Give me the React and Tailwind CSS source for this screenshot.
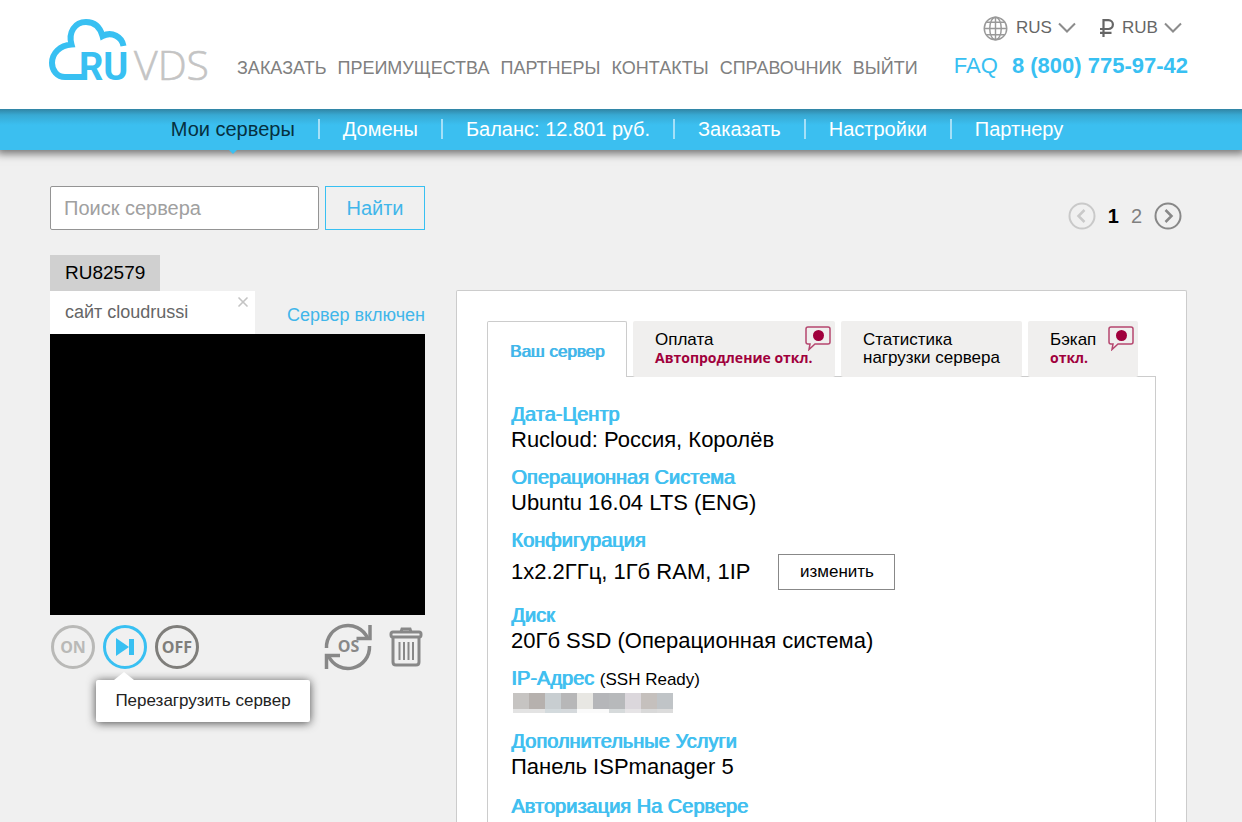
import React, { useState } from 'react';
import { X } from 'lucide-react';

const menu = ['ЗАКАЗАТЬ', 'ПРЕИМУЩЕСТВА', 'ПАРТНЕРЫ', 'КОНТАКТЫ', 'СПРАВОЧНИК', 'ВЫЙТИ'];

const sections = ['Мои серверы', 'Домены', 'Баланс: 12.801 руб.', 'Заказать', 'Настройки', 'Партнеру'];

const maskedIp = [
  { top: 'bg-[#c6c4c2]', bottom: 'bg-[#e3e3e3]' },
  { top: 'bg-[#b6b1ae]', bottom: 'bg-[#e3e3e3]' },
  { top: 'bg-[#c8ced1]', bottom: 'bg-[#d3dadd]' },
  { top: 'bg-[#b7b7b8]', bottom: 'bg-[#d5d9dc]' },
  { top: 'bg-[#e8e7e3]', bottom: 'bg-[#fafafa]' },
  { top: 'bg-[#b5b6b9]', bottom: 'bg-[#fafafa]' },
  { top: 'bg-[#b7b9bb]', bottom: 'bg-[#d6dadb]' },
  { top: 'bg-[#dbd7dc]', bottom: 'bg-[#e6e4e6]' },
  { top: 'bg-[#c5c0bd]', bottom: 'bg-[#d9d9d9]' },
  { top: 'bg-[#c0c4c7]', bottom: 'bg-[#dcdcdc]' },
];

function Logo() {
  return (
    <svg width="170" height="80" viewBox="0 0 170 80" role="img" aria-label="RUVDS">
      <path
        d="M36 59H17C9 59 4 52.500 4 45C4 35 12 27.500 23.500 26.500C20 14 27 4 38 4C46 4 52 9 54.500 18C64 13 74 19 75.500 28"
        fill="none"
        stroke="#38c0f2"
        strokeWidth="6"
      />
      <text x="31" y="62" fill="#38c0f2" className="font-[Roboto,sans-serif] text-[38px] font-bold">
        RU
      </text>
      <text
        x="86"
        y="62"
        fill="#c4c4c4"
        stroke="#c4c4c4"
        strokeWidth="0.600"
        className="font-['Open_Sans',sans-serif] text-[41px] font-light"
      >
        VDS
      </text>
    </svg>
  );
}

function Globe() {
  return (
    <svg width="25" height="25" viewBox="0 0 26 26" fill="none" stroke="#999" strokeWidth="1.500">
      <circle cx="13" cy="13" r="11.700" />
      <ellipse cx="13" cy="13" rx="6" ry="11.700" />
      <path d="M13 1v24M1 13h24M3.500 6.500h19M3.500 19.500h19" />
    </svg>
  );
}

function Ruble() {
  return (
    <svg width="14" height="18" viewBox="0 0 14 18" fill="none" stroke="#666" strokeWidth="2.200">
      <path d="M3.500 18V1.200H8.500a4.300 4.300 0 0 1 0 8.800H0M0 13.800h11.500" />
    </svg>
  );
}

function Chevron() {
  return (
    <svg width="18" height="12" viewBox="0 0 18 12" fill="none" stroke="#8c8c8c" strokeWidth="2" className="pointer-events-none -ml-5">
      <path d="M1 1.500l8 8 8-8" />
    </svg>
  );
}

function Alert() {
  return (
    <svg width="26" height="25" viewBox="0 0 26 25" fill="none" className="absolute right-1 top-[5px]">
      <path
        d="M3 1h20a2 2 0 0 1 2 2v13a2 2 0 0 1-2 2H10l-6 5.500L5 18H3a2 2 0 0 1-2-2V3a2 2 0 0 1 2-2z"
        stroke="#b5476f"
        strokeWidth="1.500"
      />
      <circle cx="13.500" cy="9.500" r="5.500" fill="#a0003c" />
    </svg>
  );
}

function RoundArrow({ label, disabled, d }) {
  return (
    <button type="button" aria-label={label} disabled={disabled} className={disabled ? 'text-[#c9c9c9]' : 'text-[#888]'}>
      <svg width="28" height="28" viewBox="0 0 28 28" fill="none" stroke="currentColor" strokeWidth="2">
        <circle cx="14" cy="14" r="12.500" />
        <path d={d} strokeWidth="2.500" />
      </svg>
    </button>
  );
}

function Field({ title, note, children }) {
  return (
    <div className="mb-[11px]">
      <dt className="text-xl leading-6 text-[#41bff0]">
        <span className="[text-shadow:1px_0_0_currentColor]">{title}</span>
        {note && <span className="ml-1.5 text-[17px] leading-4 text-black">{note}</span>}
      </dt>
      <dd className="min-h-7 text-[22px] leading-7 text-black">{children}</dd>
    </div>
  );
}

export default function App() {
  const [query, setQuery] = useState('');

  return (
    <div className="flex min-h-screen flex-col bg-[#f0f0f0] font-['Liberation_Sans',Arial,sans-serif]">
      <header className="relative z-10 flex h-[109px] items-start justify-between bg-white pl-12 pr-[54px]">
        <div className="flex items-start">
          <a href="#home" className="mt-[18px]">
            <Logo />
          </a>
          <nav className="ml-[19px] mt-14 flex gap-[11px] text-lg leading-6 text-[#808080]">
            {menu.map((item) => (
              <a key={item} href="#menu">{item}</a>
            ))}
          </nav>
        </div>
        <div className="mt-3.5">
          <div className="flex items-center justify-end gap-6 pr-1.5 text-[17px] leading-7 text-[#666]">
            <div className="flex items-center">
              <label htmlFor="language" aria-label="Язык" className="mr-2">
                <Globe />
              </label>
              <select id="language" className="w-[62px] appearance-none">
                <option>RUS</option>
              </select>
              <Chevron />
            </div>
            <div className="flex items-center">
              <label htmlFor="currency" aria-label="Валюта" className="mr-2">
                <Ruble />
              </label>
              <select id="currency" className="w-[62px] appearance-none">
                <option>RUB</option>
              </select>
              <Chevron />
            </div>
          </div>
          <div className="mt-2 flex justify-end gap-3.5 text-[22px] leading-8 text-[#38c0f2]">
            <a href="#faq">FAQ</a>
            <a href="tel:88007759742" className="font-bold">8 (800) 775-97-42</a>
          </div>
        </div>
      </header>

      <nav className="flex h-[41px] items-center justify-center bg-[linear-gradient(#3184a4,#38a9d3_6px,#3bbff0_16px)] pb-0.5 pr-2 text-xl leading-6 text-white shadow-[0_1px_8px_3px_rgba(0,0,0,0.5)]">
        {sections.map((item, i) => (
          <React.Fragment key={item}>
            {i > 0 && <span className="mx-[23px] h-5 w-0.5 bg-[#a5e0f8]" />}
            <a href="#section" className={i === 0 ? 'relative text-[#06303f]' : ''}>
              {item}
              {i === 0 && (
                <span className="absolute left-1/2 top-8 -translate-x-1/2 border-x-[5px] border-t-[5px] border-x-transparent border-t-[#3bbff0]" />
              )}
            </a>
          </React.Fragment>
        ))}
      </nav>

      <main className="flex flex-1 gap-[31px] pl-[50px] pr-[55px] pt-9">
        <section className="w-[375px] shrink-0">
          <form className="flex gap-1.5" onSubmit={(e) => e.preventDefault()}>
            <input
              type="text"
              aria-label="Поиск сервера"
              placeholder="Поиск сервера"
              value={query}
              onChange={(e) => setQuery(e.target.value)}
              className="h-11 min-w-0 flex-1 rounded-xs border border-[#949494] bg-white px-[13px] text-xl placeholder:text-[#a0a0a0]"
            />
            <button type="submit" className="h-11 w-[100px] border border-[#38c0f2] text-xl text-[#41b6ea]">
              Найти
            </button>
          </form>

          <div className="mt-[25px] flex">
            <h2 className="bg-[#d0d0d0] px-[15px] text-[19px] leading-9 text-black">RU82579</h2>
          </div>
          <div className="flex items-end justify-between">
            <div className="relative h-[43px] w-[205px] bg-white px-[15px] text-lg leading-[42px] text-[#666]">
              сайт cloudrussi
              <button type="button" aria-label="Закрыть" className="absolute right-1 top-[3px] text-[#c4c4c4]">
                <X size={16} strokeWidth={2.5} />
              </button>
            </div>
            <span className="pb-[5px] text-lg leading-7 text-[#41b6ea]">Сервер включен</span>
          </div>
          <div className="h-[281px] bg-black" />

          <div className="mt-[7px] flex items-center justify-between">
            <div className="flex gap-2 pl-px">
              <button type="button" className="size-11 rounded-full border-3 border-[#b9b9b7] font-['Open_Sans',sans-serif] text-base font-bold text-[#b9b9b7]">
                ON
              </button>
              <div className="relative">
                <button
                  type="button"
                  aria-label="Перезагрузить сервер"
                  aria-describedby="restart-tip"
                  className="flex size-11 items-center justify-center rounded-full border-3 border-[#38c0f2]"
                >
                  <svg width="20" height="20" viewBox="0 0 20 20" fill="#38c0f2">
                    <path d="M1 1l13 9L1 19z" />
                    <path d="M14 2h5v16h-5z" />
                  </svg>
                </button>
                <div
                  id="restart-tip"
                  role="tooltip"
                  className="absolute -left-[7px] top-[55px] w-[214px] rounded-xs bg-white text-center text-[17px] leading-[42px] text-[#222] shadow-[0_1px_10px_rgba(0,0,0,0.7)]"
                >
                  <span className="absolute -top-2 left-[18px] border-x-[10px] border-b-8 border-x-transparent border-b-white" />
                  Перезагрузить сервер
                </div>
              </div>
              <button type="button" className="size-11 rounded-full border-3 border-[#7f7e7b] font-['Open_Sans',sans-serif] text-base font-bold text-[#7f7e7b]">
                OFF
              </button>
            </div>
            <div className="flex items-center gap-4">
              <button type="button" aria-label="Переустановить ОС">
                <svg width="50" height="50" viewBox="0 0 50 50" fill="none" stroke="#888" strokeWidth="3.500">
                  <path d="M3.500 26A21.500 21.500 0 0 1 44.500 16" />
                  <path d="M46.500 24A21.500 21.500 0 0 1 5.500 34" />
                  <path d="M47 3v13.500H33.500" />
                  <path d="M3.500 47V33.500H17" />
                  <text
                    x="25.500"
                    y="30"
                    textAnchor="middle"
                    stroke="none"
                    fill="#888"
                    className="font-['Open_Sans',sans-serif] text-base font-bold"
                  >
                    OS
                  </text>
                </svg>
              </button>
              <button type="button" aria-label="Удалить" className="pr-0.5">
                <svg width="34" height="40" viewBox="0 0 34 40" fill="none" stroke="#888" strokeWidth="3">
                  <rect x="2" y="5" width="30" height="5" rx="2" />
                  <path d="M12 5l1-3h8l1 3" />
                  <path d="M4 10v25q0 3 3 3h20q3 0 3-3V10" />
                  <path d="M10.500 15v18M15 15v18M19.500 15v18M24 15v18" strokeWidth="2" />
                </svg>
              </button>
            </div>
          </div>
        </section>

        <section className="flex min-w-0 flex-1 flex-col">
          <div className="mb-[60px] mt-4 flex items-center justify-end gap-3 pr-[5px] text-xl">
            <RoundArrow label="Назад" disabled d="M16.500 8l-6 6 6 6" />
            <a href="#page1" className="font-bold text-black">1</a>
            <a href="#page2" className="text-[#808080]">2</a>
            <RoundArrow label="Вперёд" d="M11.500 8l6 6-6 6" />
          </div>

          <div className="flex flex-1 flex-col rounded-t-xs border border-b-0 border-[#ccc] bg-white px-[30px] pt-[30px]">
            <div role="tablist" className="flex gap-1.5 text-[17px] leading-[18px] text-black">
              <button
                role="tab"
                aria-selected="true"
                className="relative -mb-px h-14 w-[140px] rounded-t-xs border border-b-0 border-[#ccc] bg-white pt-1 text-[#41b6ea] [text-shadow:1px_0_0_currentColor]"
              >
                Ваш сервер
              </button>
              <button role="tab" aria-selected="false" className="relative -mb-px h-14 w-[202px] rounded-xs bg-[#f0efee] pl-[22px] text-left">
                <span className="block">Оплата</span>
                <span className="block whitespace-nowrap font-['Open_Sans',sans-serif] text-sm leading-[18px] font-bold text-[#a0003c]">
                  Автопродление откл.
                </span>
                <Alert />
              </button>
              <button role="tab" aria-selected="false" className="relative -mb-px h-14 w-[181px] rounded-xs bg-[#f0efee] pl-[22px] text-left">
                <span className="block">Статистика</span>
                <span className="block whitespace-nowrap">нагрузки сервера</span>
              </button>
              <button role="tab" aria-selected="false" className="relative -mb-px h-14 w-[110px] rounded-xs bg-[#f0efee] pl-[22px] text-left">
                <span className="block">Бэкап</span>
                <span className="block font-['Open_Sans',sans-serif] text-sm leading-[18px] font-bold text-[#a0003c]">откл.</span>
                <Alert />
              </button>
            </div>

            <dl className="flex-1 border border-b-0 border-[#ccc] px-[23px] pt-[25px]">
              <Field title="Дата-Центр">Rucloud: Россия, Королёв</Field>
              <Field title="Операционная Система">Ubuntu 16.04 LTS (ENG)</Field>
              <Field title="Конфигурация">
                <div className="flex h-10 items-center gap-7">
                  <span>1x2.2ГГц, 1Гб RAM, 1IP</span>
                  <button type="button" className="h-9 w-[117px] border border-[#888] text-[17px]">
                    изменить
                  </button>
                </div>
              </Field>
              <Field title="Диск">20Гб SSD (Операционная система)</Field>
              <Field title="IP-Адрес" note="(SSH Ready)">
                <div className="flex pl-0.5 pt-[3px]" aria-hidden="true">
                  {maskedIp.map((cell, i) => (
                    <div key={i} className="w-4">
                      <div className={`h-4 ${cell.top}`} />
                      <div className={`h-1 ${cell.bottom}`} />
                    </div>
                  ))}
                </div>
              </Field>
              <Field title="Дополнительные Услуги">Панель ISPmanager 5</Field>
              <dt className="text-xl leading-7 text-[#41bff0] [text-shadow:1px_0_0_currentColor]">Авторизация На Сервере</dt>
            </dl>
          </div>
        </section>
      </main>
    </div>
  );
}
